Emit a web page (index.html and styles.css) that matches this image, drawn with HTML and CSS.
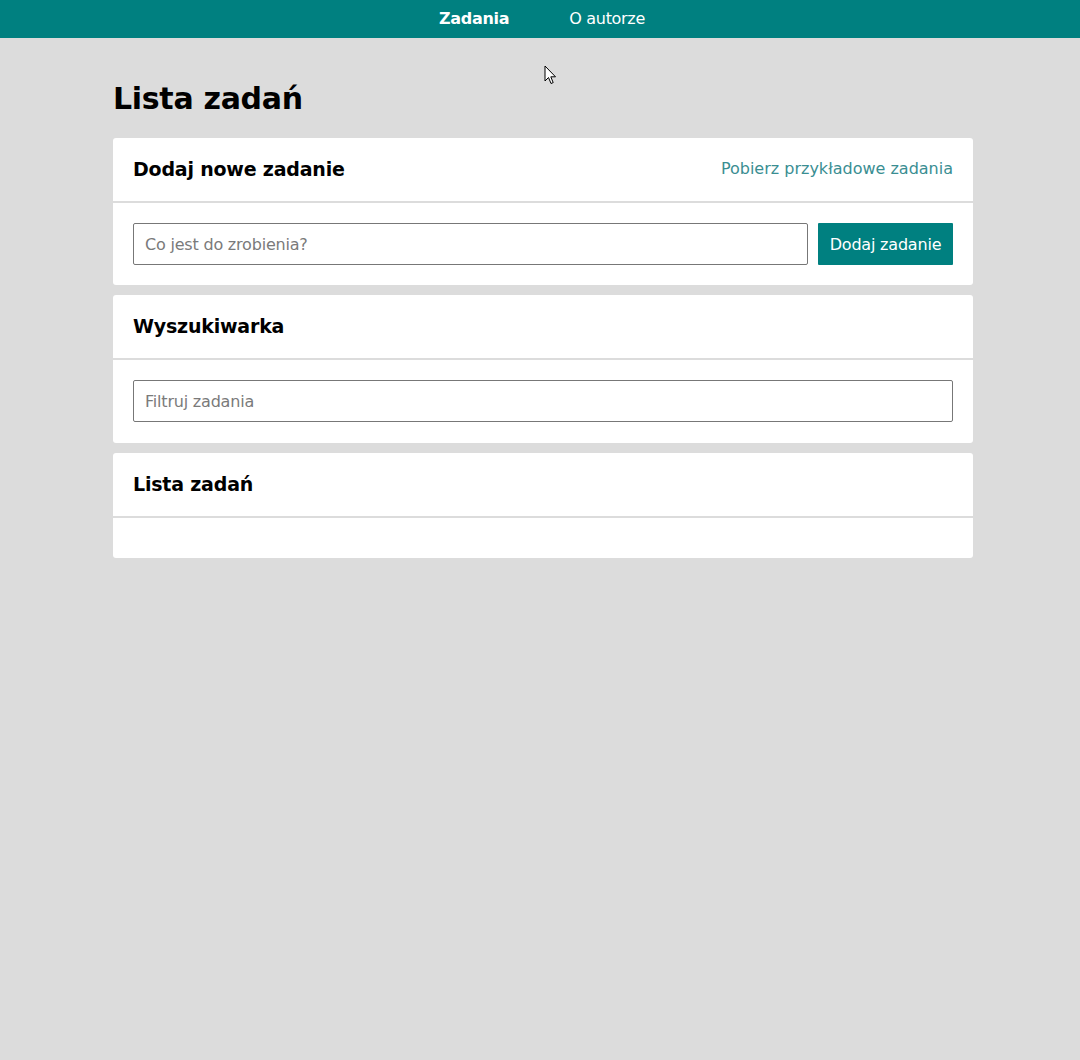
FILE: index.html
```html
<!DOCTYPE html>
<html lang="pl">
<head>
<meta charset="utf-8">
<title>Lista zadań</title>
<link rel="stylesheet" href="styles.css">
</head>
<body>
<nav class="navbar">
  <a class="nav-link active" href="#">Zadania</a>
  <a class="nav-link" href="#">O autorze</a>
</nav>
<main class="container">
  <h1 class="page-title">Lista zadań</h1>
  <section class="card">
    <div class="card-header">
      <h2 class="card-title">Dodaj nowe zadanie</h2>
      <a class="card-link" href="#">Pobierz przykładowe zadania</a>
    </div>
    <div class="card-body add-row">
      <input class="text-input" type="text" placeholder="Co jest do zrobienia?">
      <button class="btn" type="button">Dodaj zadanie</button>
    </div>
  </section>
  <section class="card">
    <div class="card-header">
      <h2 class="card-title">Wyszukiwarka</h2>
    </div>
    <div class="card-body search-body">
      <input class="text-input full" type="text" placeholder="Filtruj zadania">
    </div>
  </section>
  <section class="card">
    <div class="card-header">
      <h2 class="card-title">Lista zadań</h2>
    </div>
    <div class="card-body empty"></div>
  </section>
</main>
<svg class="cursor" width="14" height="22" viewBox="0 0 14 22" aria-hidden="true">
  <path d="M1 1 L1 16 L4.5 12.5 L7 18.5 L9.2 17.6 L6.8 11.8 L11.5 11.8 Z" fill="#fff" stroke="#000" stroke-width="1" stroke-linejoin="round"/>
</svg>
</body>
</html>
```
FILE: styles.css
```css
* { box-sizing: border-box; }
html, body { margin: 0; padding: 0; }
body {
  background: #dcdcdc;
  font-family: "DejaVu Sans", "Open Sans", sans-serif;
  color: #000;
  min-height: 1060px;
}
.navbar {
  background: #008080;
  height: 38px;
  display: flex;
  justify-content: center;
  align-items: center;
  gap: 60px;
  padding-left: 4px;
}
.nav-link {
  color: #fff;
  text-decoration: none;
  font-size: 16px;
  letter-spacing: -0.3px;
  line-height: 36px;
}
.nav-link.active { font-weight: bold; }
.container {
  width: 860px;
  margin: 0 auto;
  position: relative;
  left: 3px;
  padding-top: 40px;
  display: flex;
  flex-direction: column;
  gap: 10px;
}
.page-title {
  margin: 0 0 8px 0;
  font-size: 30px;
  line-height: 42px;
  font-weight: bold;
  letter-spacing: -0.3px;
}
.card {
  background: #fff;
  border-radius: 3px;
}
.card-header {
  height: 65px;
  padding: 0 20px 2px;
  display: flex;
  align-items: center;
  justify-content: space-between;
  border-bottom: 2px solid #dcdcdc;
}
.card-title {
  margin: 0;
  font-size: 19px;
  font-weight: bold;
  letter-spacing: -0.2px;
}
.card-link {
  color: #3a8e92;
  text-decoration: none;
  font-size: 16px;
  letter-spacing: 0;
}
.card-body { padding: 20px; }
.card-body.search-body { padding-bottom: 21px; }
.card-body.empty { height: 40px; }
.add-row { display: flex; gap: 10px; }
.text-input {
  flex: 1;
  height: 42px;
  border: 1px solid #777;
  border-radius: 2px;
  padding: 0 11px;
  font-family: inherit;
  font-size: 16px;
  color: #333;
  outline: none;
}
.text-input.full { width: 100%; }
.text-input::placeholder { color: #7a7a7a; letter-spacing: -0.2px; }
.btn {
  width: 135px;
  height: 42px;
  border: none;
  border-radius: 1px;
  background: #008080;
  color: #fff;
  font-family: inherit;
  font-size: 16px;
  letter-spacing: -0.2px;
  padding: 0;
}
.cursor {
  position: absolute;
  left: 544px;
  top: 65px;
}
```
